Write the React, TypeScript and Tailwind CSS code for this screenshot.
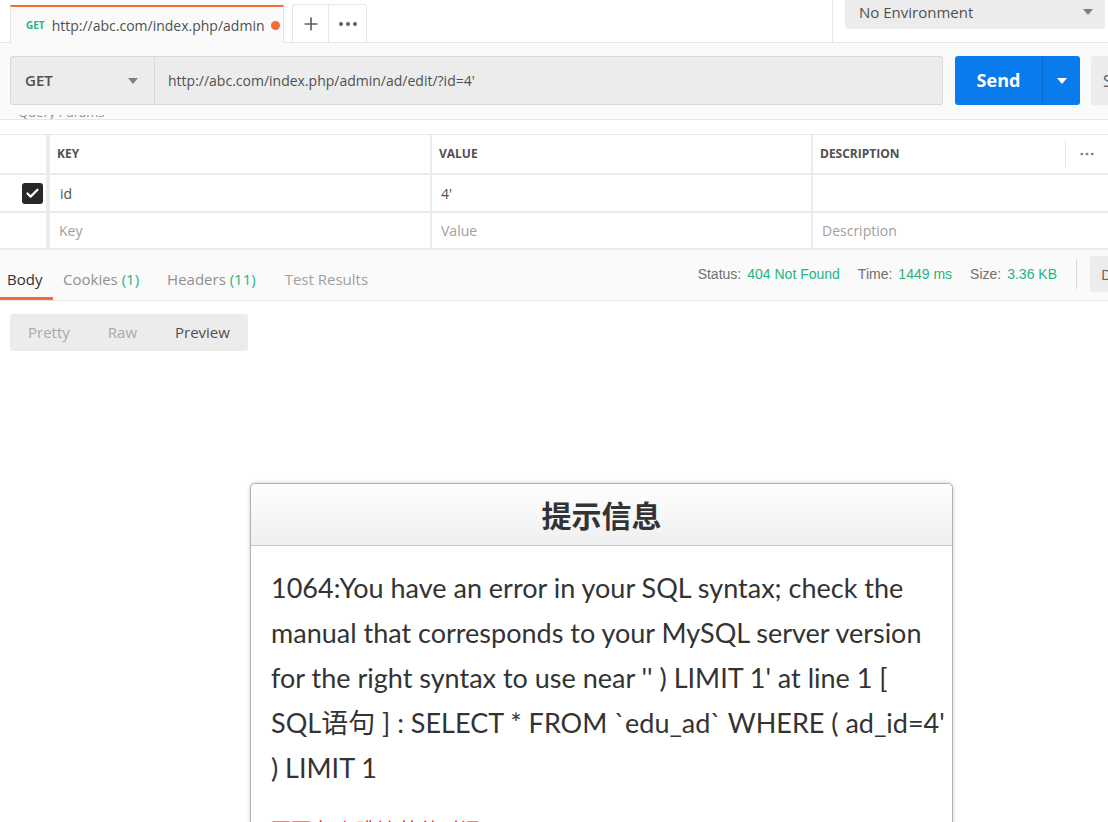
import { Check, Plus } from "lucide-react";

const Caret = ({ className = "" }: { className?: string }) => (
  <svg width="10" height="6" viewBox="0 0 10 6" className={className}>
    <path d="M0 0h10L5 6z" fill="currentColor" />
  </svg>
);

const Dots = ({ className = "" }: { className?: string }) => (
  <svg width="18" height="4" viewBox="0 0 18 4" className={className}>
    <circle cx="2" cy="2" r="2" fill="currentColor" />
    <circle cx="9" cy="2" r="2" fill="currentColor" />
    <circle cx="16" cy="2" r="2" fill="currentColor" />
  </svg>
);

const App = () => {
  return (
    <div className="w-[1108px] h-[822px] overflow-hidden bg-white font-['Open_Sans',sans-serif] text-[#505050]">
      {/* Tabs */}
      <div className="flex h-[43px] border-b border-[#e6e6e6]">
        <div className="flex items-end pl-[10px] gap-[8px] shrink-0">
          <div className="flex items-center w-[274px] h-[38px] -mb-px bg-[#fafafa] border-t-2 border-[#f26b3a] border-x border-x-[#e6e6e6] pl-[15px] pr-[6px]">
            <span className="text-[10px] font-bold text-[#26b47f] mr-[7px]">GET</span>
            <span className="text-[14px] text-[#505050] whitespace-nowrap">http://abc.com/index.php/admin</span>
            <span className="w-[9px] h-[9px] rounded-full bg-[#f26b3a] ml-[6px] shrink-0" />
          </div>
          <div className="flex h-[38px] border border-b-0 border-[#e6e6e6] rounded-t-[3px]">
            <div className="w-[36px] flex items-center justify-center border-r border-[#e6e6e6]">
              <Plus size={20} strokeWidth={2} className="text-[#606060]" />
            </div>
            <div className="w-[37px] flex items-center justify-center">
              <Dots className="text-[#606060]" />
            </div>
          </div>
        </div>
        <div className="flex-1" />
        <div className="w-[276px] shrink-0 border-l border-[#e6e6e6] pl-[12px]">
          <div className="flex items-center justify-between w-[260px] h-[29px] bg-[#ececec] rounded-b-[4px] pl-[14px] pr-[12px] pb-[5px]">
            <span className="text-[15px]">No Environment</span>
            <Caret className="text-[#808080]" />
          </div>
        </div>
      </div>

      {/* Request bar */}
      <div className="bg-[#fafafa] h-[77px] border-b border-[#e6e6e6] pt-[13px] overflow-hidden">
        <div className="flex pl-[10px]">
          <div className="shrink-0 flex items-center justify-between w-[145px] h-[49px] bg-[#ececec] border border-[#d8d8d8] rounded-l-[3px] pl-[14px] pr-[16px]">
            <span className="text-[15px] font-semibold">GET</span>
            <Caret className="text-[#808080]" />
          </div>
          <div className="shrink-0 flex items-center w-[788px] h-[49px] bg-[#ececec] border border-l-0 border-[#d8d8d8] rounded-r-[3px] pl-[13px]">
            <span className="text-[14px]">http://abc.com/index.php/admin/ad/edit/?id=4'</span>
          </div>
          <div className="shrink-0 flex ml-[12px] w-[125px] h-[49px] bg-[#097bed] rounded-[3px] text-white">
            <div className="w-[87px] flex items-center justify-center text-[18px] font-bold">Send</div>
            <div className="flex-1 flex items-center justify-center border-l border-[#0a6cd0]">
              <Caret />
            </div>
          </div>
          <div className="shrink-0 ml-[11px] w-[60px] h-[49px] bg-[#ececec] rounded-l-[3px] flex items-center pl-[12px] text-[16px] text-[#606060]">
            Save
          </div>
        </div>
        <div className="h-[5px] mt-[10px] overflow-hidden pl-[18px]">
          <div className="text-[13px] text-[#909090] -mt-[12px]">Query Params</div>
        </div>
      </div>

      {/* Params table */}
      <div className="mt-[14px] border-t border-[#e6e6e6] text-[14px]">
        <div className="flex h-[40px] border-b-2 border-[#ececec]">
          <div className="w-[50px] border-r-4 border-[#ececec]" />
          <div className="w-[382px] border-r-2 border-[#ececec] flex items-center pl-[7px] text-[12px] font-bold">KEY</div>
          <div className="w-[381px] border-r-2 border-[#ececec] flex items-center pl-[7px] text-[12px] font-bold">VALUE</div>
          <div className="flex-1 flex items-center pl-[7px] text-[12px] font-bold">
            <span className="flex-1">DESCRIPTION</span>
            <div className="h-[26px] border-l border-[#e6e6e6] w-[43px] flex items-center justify-center">
              <Dots className="text-[#808080] scale-75" />
            </div>
          </div>
        </div>
        <div className="flex h-[38px] border-b-2 border-[#ececec]">
          <div className="w-[50px] border-r-4 border-[#ececec] flex items-center justify-end pr-[3px]">
            <div className="w-[21px] h-[21px] rounded-[3px] bg-[#282828] flex items-center justify-center">
              <Check size={15} strokeWidth={3.5} className="text-white" />
            </div>
          </div>
          <div className="w-[382px] border-r-2 border-[#ececec] flex items-center pl-[10px]">id</div>
          <div className="w-[381px] border-r-2 border-[#ececec] flex items-center pl-[9px]">4'</div>
          <div className="flex-1" />
        </div>
        <div className="flex h-[37px] border-b-2 border-[#ececec] text-[#a0a0a0]">
          <div className="w-[50px] border-r-4 border-[#ececec]" />
          <div className="w-[382px] border-r-2 border-[#ececec] flex items-center pl-[9px]">Key</div>
          <div className="w-[381px] border-r-2 border-[#ececec] flex items-center pl-[9px]">Value</div>
          <div className="flex-1 flex items-center pl-[9px]">Description</div>
        </div>
      </div>

      {/* Response bar */}
      <div className="flex h-[51px] bg-[#fafafa] border-b border-[#e6e6e6] overflow-hidden">
        <div className="flex items-end text-[15px] shrink-0">
          <div className="pl-[7px] pb-[7px] border-b-[3px] border-[#f26b3a] text-[#303030] w-[53px]">Body</div>
          <div className="ml-[10px] pb-[7px] border-b-[3px] border-transparent text-[#909090]">
            Cookies <span className="text-[#26b47f]">(1)</span>
          </div>
          <div className="ml-[28px] pb-[7px] border-b-[3px] border-transparent text-[#909090]">
            Headers <span className="text-[#26b47f]">(11)</span>
          </div>
          <div className="ml-[29px] pb-[7px] border-b-[3px] border-transparent text-[#a0a0a0]">Test Results</div>
        </div>
        <div className="flex-1" />
        <div className="shrink-0 flex items-center font-['Liberation_Sans',sans-serif] text-[14px] text-[#707070] pb-[2px]">
          <span>Status:</span>
          <span className="ml-[6px] text-[#26b47f]">404 Not Found</span>
          <span className="ml-[18px]">Time:</span>
          <span className="ml-[6px] text-[#26b47f]">1449 ms</span>
          <span className="ml-[18px]">Size:</span>
          <span className="ml-[6px] text-[#26b47f]">3.36 KB</span>
          <div className="ml-[19px] w-px h-[30px] bg-[#d8d8d8]" />
          <div className="ml-[13px] w-[18px] h-[36px] bg-[#ececec] rounded-l-[3px] flex items-center pl-[11px] text-[#606060] font-['Open_Sans',sans-serif] text-[15px] overflow-hidden">
            D
          </div>
        </div>
      </div>

      {/* Format switch */}
      <div className="flex ml-[10px] mt-[13px] w-[238px] h-[37px] bg-[#ececec] rounded-[3px] text-[15px] items-center">
        <div className="pl-[18px] pr-[19px] text-[#a8a8a8]">Pretty</div>
        <div className="px-[19px] text-[#a8a8a8]">Raw</div>
        <div className="px-[19px] text-[#505050]">Preview</div>
      </div>

      {/* Preview */}
      <div className="ml-[250px] mt-[132px] w-[703px] border border-[#b0b0b0] rounded-t-[5px] shadow-[0_0_4px_rgba(0,0,0,0.2)] bg-white">
        <div className="h-[62px] flex items-center justify-center bg-gradient-to-b from-white to-[#efefef] border-b border-[#c8c8c8] rounded-t-[5px]">
          <span className="text-[30px] font-bold text-[#333] font-['Noto_Sans_CJK_SC',sans-serif]">提示信息</span>
        </div>
        <div className="px-[20px] pt-[19px] pb-[10px] text-[#333] text-[27px] leading-[45px] font-['Lato','Noto_Sans_CJK_SC',sans-serif]">
          <p className="whitespace-nowrap">
            1064:You have an error in your SQL syntax; check the<br />
            manual that corresponds to your MySQL server version<br />
            for the right syntax to use near '' ) LIMIT 1' at line 1 [<br />
            SQL语句 ] : SELECT * FROM `edu_ad` WHERE ( ad_id=4'<br />
            ) LIMIT 1
          </p>
          <p className="mt-[30px] text-[20px] leading-[20px] text-[#c0392b] font-['Noto_Sans_CJK_SC',sans-serif]">
            页面自动 跳转 等待时间： 3
          </p>
        </div>
      </div>
    </div>
  );
};

export default App;
